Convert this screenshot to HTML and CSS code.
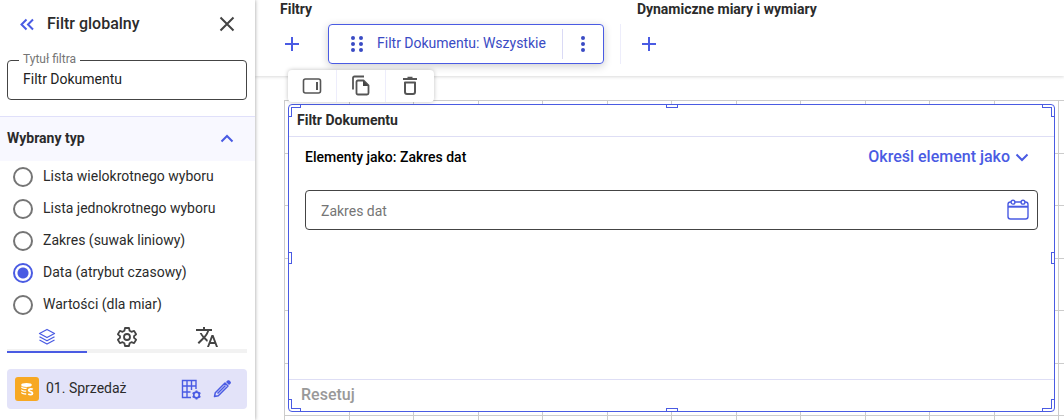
FILE: index.html
```html
<!DOCTYPE html>
<html lang="pl">
<head>
    <meta charset="UTF-8">
    <meta name="viewport" content="width=device-width, initial-scale=1.0">
    <title>Filtr globalny</title>
    <link rel="stylesheet" href="styles.css">
</head>
<body>
    <aside class="sidebar">
        <header class="sidebar-header">
            <button type="button" class="icon-button" aria-label="Zwiń">
                <svg width="24" height="24" viewBox="0 0 24 24" fill="none" stroke="#4a5be3" stroke-width="2"><path d="M11.500 7.500l-5 5 5 5M18 7.500l-5 5 5 5"/></svg>
            </button>
            <h1>Filtr globalny</h1>
            <button type="button" class="icon-button" aria-label="Zamknij">
                <svg width="24" height="24" viewBox="0 0 24 24" fill="none" stroke="#444" stroke-width="2"><path d="M5.500 5.500l13 13M18.500 5.500l-13 13"/></svg>
            </button>
        </header>

        <div class="text-field">
            <label for="filterTitle">Tytuł filtra</label>
            <input type="text" id="filterTitle" value="Filtr Dokumentu">
        </div>

        <button type="button" class="section-toggle">
            Wybrany typ
            <svg width="24" height="24" viewBox="0 0 24 24" fill="none" stroke="#4a5be3" stroke-width="2"><path d="M6.500 15.500l5.500-5.500 5.500 5.500"/></svg>
        </button>

        <div class="radio-list">
            <label><input type="radio" name="type"> <span>Lista wielokrotnego wyboru</span></label>
            <label><input type="radio" name="type"> <span>Lista jednokrotnego wyboru</span></label>
            <label><input type="radio" name="type"> <span>Zakres (suwak liniowy)</span></label>
            <label><input type="radio" name="type" checked> <span>Data (atrybut czasowy)</span></label>
            <label><input type="radio" name="type"> <span>Wartości (dla miar)</span></label>
        </div>

        <nav class="tabs">
            <button type="button" class="tab active" aria-label="Dane">
                <svg width="20" height="20" viewBox="0 0 20 20" fill="none" stroke="#4a5be3" stroke-width="1.300" stroke-linejoin="round"><path d="M10 2.500l7.500 4-7.500 4-7.500-4zM2.500 9.800l7.500 4 7.500-4M2.500 13l7.500 4 7.500-4"/></svg>
            </button>
            <button type="button" class="tab" aria-label="Ustawienia">
                <svg width="24" height="24" viewBox="0 0 24 24" fill="none" stroke="#444" stroke-width="1.800" stroke-linejoin="round"><path d="M10 3h4l.6 2.800 1.800 1 2.700-.9 2 3.400-2.100 1.900v1.600l2.100 1.900-2 3.400-2.700-.9-1.800 1L14 21h-4l-.6-2.800-1.800-1-2.700.9-2-3.400L5 12.800v-1.600L2.900 9.300l2-3.400 2.700.9 1.800-1z"/><circle cx="12" cy="12" r="3"/></svg>
            </button>
            <button type="button" class="tab" aria-label="Tłumaczenia">
                <svg width="24" height="24" viewBox="0 0 24 24" fill="#444"><path d="M12.870 15.070l-2.540-2.510.030-.03c1.740-1.940 2.980-4.170 3.710-6.530H17V4h-7V2H8v2H1v1.990h11.170C11.500 7.920 10.440 9.750 9 11.350 8.070 10.320 7.300 9.190 6.690 8h-2c.730 1.630 1.730 3.170 2.980 4.560l-5.090 5.020L4 19l5-5 3.110 3.110.760-2.040zM18.500 10h-2L12 22h2l1.120-3h4.750L21 22h2l-4.500-12zm-2.620 7l1.620-4.330L19.120 17h-3.240z"/></svg>
            </button>
        </nav>

        <div class="data-source">
            <svg width="24" height="24" viewBox="0 0 24 24">
                <rect width="24" height="24" rx="3" fill="#f7a823"/>
                <ellipse cx="11.500" cy="8" rx="5.300" ry="1.900" fill="#fff"/>
                <path d="M6.200 9.500v1.200c.8.900 2.500 1.300 5 1.300l1-1.200c-3 0-5-.4-6-1.300zM6.200 12.300v1.200c.8.900 2.500 1.300 5 1.300v-1.300c-2.400 0-4-.3-5-1.200zM6.200 15.100v1.200c.8.900 2.500 1.400 5 1.400v-1.400c-2.400 0-4-.3-5-1.200z" fill="#fff"/>
                <path d="M17.700 12.400c-1-.9-4-.9-4 .9 0 1.700 3.800.9 3.800 2.900 0 1.900-3 1.700-4.200.6" fill="none" stroke="#fff" stroke-width="1.800"/>
            </svg>
            <span>01. Sprzedaż</span>
            <button type="button" class="icon-button" aria-label="Konfiguruj tabelę">
                <svg width="24" height="24" viewBox="0 0 24 24" fill="none" stroke="#4a5be3" stroke-width="1.400">
                    <path d="M12 20.500H3.500v-17h13.500V12M3.500 9h13.500M3.500 15h8M8 3.500v17M12.500 3.500V13"/>
                    <circle cx="17.500" cy="18" r="2.800" stroke-width="1.700"/>
                    <path d="M17.500 13.500v1.700M17.500 20.800v1.700M13.600 15.700l1.500.9M19.900 19.400l1.500.9M13.600 20.300l1.500-.9M19.900 16.600l1.500-.9" stroke-width="1.800"/>
                </svg>
            </button>
            <button type="button" class="icon-button" aria-label="Edytuj">
                <svg width="24" height="24" viewBox="0 0 24 24" fill="none" stroke="#4a5be3" stroke-width="1.500" stroke-linejoin="round"><path d="M4.500 19.500l.8-3.800L15 6l3 3-9.700 9.700zM7.500 16.500l8-8"/><path d="M16 5l1.800-1.800h1.300l1.800 1.800v1.300L19 8.100z" fill="#4a5be3" stroke="none"/></svg>
            </button>
        </div>
    </aside>

    <main class="main">
        <div class="toolbar">
            <section class="toolbar-group">
                <h2>Filtry</h2>
                <div class="toolbar-row">
                    <button type="button" class="icon-button" aria-label="Dodaj filtr">
                        <svg width="24" height="24" viewBox="0 0 24 24" fill="none" stroke="#4a5be3" stroke-width="2"><path d="M12 5v14M5 12h14"/></svg>
                    </button>
                    <div class="chip">
                        <button type="button" class="chip-main">
                            <svg width="24" height="24" viewBox="0 0 24 24" fill="#3a4bc4"><circle cx="8" cy="6" r="2"/><circle cx="16" cy="6" r="2"/><circle cx="8" cy="12" r="2"/><circle cx="16" cy="12" r="2"/><circle cx="8" cy="18" r="2"/><circle cx="16" cy="18" r="2"/></svg>
                            <span>Filtr Dokumentu: Wszystkie</span>
                        </button>
                        <button type="button" class="chip-menu" aria-label="Więcej">
                            <svg width="24" height="24" viewBox="0 0 24 24" fill="#3a4bc4"><circle cx="12" cy="6" r="2"/><circle cx="12" cy="12" r="2"/><circle cx="12" cy="18" r="2"/></svg>
                        </button>
                    </div>
                </div>
            </section>
            <section class="toolbar-group">
                <h2>Dynamiczne miary i wymiary</h2>
                <div class="toolbar-row">
                    <button type="button" class="icon-button" aria-label="Dodaj miarę">
                        <svg width="24" height="24" viewBox="0 0 24 24" fill="none" stroke="#4a5be3" stroke-width="2"><path d="M12 5v14M5 12h14"/></svg>
                    </button>
                </div>
            </section>
        </div>

        <div class="board">
            <!-- guide lines under the widgets -->
            <div class="guides guide-cols"><i></i><i></i><i></i><i></i><i></i><i></i><i></i><i></i><i></i><i></i><i></i><i></i><i></i></div>
            <div class="guides guide-rows"><i></i><i></i><i></i><i></i><i></i><i></i><i></i></div>

            <section class="widget">
                <h3>Filtr Dokumentu</h3>
                <div class="widget-body">
                    <div class="widget-row">
                        <label for="dateRange">Elementy jako: Zakres dat</label>
                        <button type="button" class="link-button">
                            Określ element jako
                            <svg width="16" height="16" viewBox="0 0 16 16" fill="none" stroke="#4a5be3" stroke-width="2"><path d="M2.500 5.500L8 11l5.500-5.500"/></svg>
                        </button>
                    </div>
                    <div class="date-field">
                        <input type="text" id="dateRange" placeholder="Zakres dat">
                        <button type="button" class="icon-button" aria-label="Kalendarz">
                            <svg width="24" height="24" viewBox="0 0 24 24" fill="none" stroke="#4a5be3" stroke-width="1.400"><rect x="2" y="4" width="20" height="17" rx="2.500"/><path d="M2 8.700h20" stroke-width="2"/><circle cx="7" cy="4.200" r="1.900" fill="#fff"/><circle cx="17" cy="4.200" r="1.900" fill="#fff"/></svg>
                        </button>
                    </div>
                </div>
                <footer>
                    <button type="button" class="reset" disabled>Resetuj</button>
                </footer>

                <svg class="handle top left" width="13" height="13"><path d="M12.500 0v3.500h-9v9H0"/></svg>
                <svg class="handle top right" width="13" height="13"><path d="M.5 0v3.500h9v9H13"/></svg>
                <svg class="handle bottom left" width="13" height="13"><path d="M12.500 13V9.500h-9v-9H0"/></svg>
                <svg class="handle bottom right" width="13" height="13"><path d="M.5 13V9.500h9v-9H13"/></svg>
                <svg class="handle top center" width="12" height="4"><path d="M.5 0v3.500h11V0"/></svg>
                <svg class="handle bottom center" width="12" height="4"><path d="M.5 4V.5h11V4"/></svg>
                <svg class="handle left middle" width="4" height="12"><path d="M0 .5h3.500v11H0"/></svg>
                <svg class="handle right middle" width="4" height="12"><path d="M4 .5H.5v11H4"/></svg>

                <div class="widget-tools">
                    <button type="button" aria-label="Panel">
                        <svg width="24" height="24" viewBox="0 0 24 24" fill="none" stroke="#555" stroke-width="1.600"><rect x="3.500" y="5" width="17" height="14" rx="2"/><path d="M17 8v8" stroke-width="2"/></svg>
                    </button>
                    <button type="button" aria-label="Kopiuj">
                        <svg width="24" height="24" viewBox="0 0 24 24" fill="none" stroke="#555" stroke-width="1.800" stroke-linejoin="round"><path d="M4 15.500V4q0-1.500 1.500-1.500H15M9 6.500h5.500l5 5V19q0 1.500-1.500 1.500H9q-1.500 0-1.500-1.500V8q0-1.500 1.500-1.500z"/><path d="M14 6.500V12h5.500z" fill="#444" stroke="none"/></svg>
                    </button>
                    <button type="button" aria-label="Usuń">
                        <svg width="24" height="24" viewBox="0 0 24 24" fill="none" stroke="#555" stroke-width="2" stroke-linejoin="round"><path d="M7 8.500h10V18q0 2-2 2H9q-2 0-2-2zM5 5h14M9.500 3.800h5"/></svg>
                    </button>
                </div>
            </section>
        </div>
    </main>
</body>
</html>
```
FILE: styles.css
```css
* {
    box-sizing: border-box;
}
body {
    margin: 0;
    display: flex;
    height: 100vh;
    overflow: hidden;
    font-family: Roboto, Arial, sans-serif;
    font-size: 14px;
    line-height: 20px;
    color: #2b2b2b;
    background-color: #fff;
}
h1, h2, h3 {
    margin: 0;
    font-size: 14px;
    font-weight: 500;
}
button {
    font: inherit;
    color: inherit;
    background: none;
    border: none;
    padding: 0;
    cursor: pointer;
}
svg {
    display: block;
    flex: none;
}
.icon-button {
    flex: none;
}

/* sidebar */
.sidebar {
    width: 255px;
    flex: none;
    background-color: #fff;
    box-shadow: 0 0 4px rgba(0, 0, 0, 0.4);
    z-index: 1;
}
.sidebar-header {
    display: flex;
    align-items: center;
    gap: 8px;
    height: 48px;
    padding: 0 16px 0 15px;
}
.sidebar-header h1 {
    flex: 1;
    font-size: 16px;
}
.text-field {
    position: relative;
    margin: 12px 8px 16px 7px;
}
.text-field label {
    position: absolute;
    top: -9px;
    left: 12px;
    padding: 0 4px;
    font-size: 12px;
    line-height: 16px;
    color: #757575;
    background-color: #fff;
}
.text-field input, .date-field {
    width: 100%;
    height: 40px;
    border: 1px solid #444;
    border-radius: 4px;
}
.text-field input {
    display: block;
    padding: 0 15px 2px;
    font: inherit;
    color: #222;
}
.section-toggle {
    display: flex;
    align-items: center;
    justify-content: space-between;
    width: 100%;
    height: 45px;
    padding: 0 16px 2px 7px;
    font-weight: 700;
    background-color: #f8f8ff;
    border-top: 1px solid #e0e0fa;
}
.radio-list label {
    display: flex;
    align-items: center;
    gap: 10px;
    height: 32px;
    padding-left: 13px;
}
.radio-list span, .chip-main span, .data-source span {
    padding-bottom: 2px;
}
.radio-list input {
    appearance: none;
    width: 20px;
    height: 20px;
    margin: 0;
    border: 2px solid #757575;
    border-radius: 50%;
}
.radio-list input:checked {
    border-color: #4a5be3;
    background: radial-gradient(circle, #4a5be3 5px, #fff 6px);
}
.tabs {
    display: flex;
    margin: 0 8px 16px 7px;
    background: linear-gradient(#f2f2f2, #f2f2f2) bottom / 100% 4px no-repeat;
}
.tab {
    flex: 1;
    display: flex;
    align-items: center;
    justify-content: center;
    height: 32px;
    padding-top: 2px;
    border-bottom: 2px solid transparent;
}
.tab.active {
    border-bottom-color: #4a5be3;
}
.data-source {
    display: flex;
    align-items: center;
    gap: 7px;
    height: 40px;
    margin: 0 8px 0 7px;
    padding: 0 13px 0 8px;
    background-color: #e3e3f9;
    border-radius: 4px;
}
.data-source span {
    flex: 1;
}

/* top toolbar */
.main {
    flex: 1;
    min-width: 0;
    display: flex;
    flex-direction: column;
}
.toolbar {
    display: flex;
    height: 76px;
    flex: none;
    padding-left: 25px;
    box-shadow: 0 1px 3px rgba(0, 0, 0, 0.15);
}
.toolbar-group + .toolbar-group {
    margin-left: 16px;
    background: linear-gradient(#ededfb, #ededfb) 0 24px / 1px 40px no-repeat;
    padding-left: 17px;
}
.toolbar-group h2 {
    height: 24px;
    line-height: 18px;
    font-weight: 700;
}
.toolbar-row {
    display: flex;
    align-items: center;
    gap: 24px;
    height: 40px;
}
.chip {
    display: flex;
    align-items: center;
    height: 40px;
    color: #3a4bc4;
    border: 1px solid #4a5be3;
    border-radius: 4px;
    box-shadow: 0 2px 8px rgba(0, 0, 0, 0.2);
}
.chip-main {
    display: flex;
    align-items: center;
    gap: 8px;
    padding: 0 16px;
}
.chip-menu {
    display: flex;
    align-items: center;
    height: 30px;
    padding: 0 8px;
    border-left: 1px solid #dadaf5;
}

/* board with the edited widget */
.board {
    position: relative;
    flex: 1;
    margin: 24px 0 0 29px;
    padding: 4px 9px 8px 4px;
}
.guides {
    position: absolute;
    inset: 0;
    display: grid;
}
.guide-cols {
    grid-template-columns: repeat(12, 1fr) 6px;
}
.guide-cols i {
    border-left: 1px solid #ccc;
}
.guide-rows {
    grid-template-rows: repeat(6, 1fr) 5px;
}
.guide-rows i {
    border-top: 1px solid #ccc;
}
.widget {
    position: relative;
    display: flex;
    flex-direction: column;
    height: 100%;
    background-color: #fff;
    border: 1px solid #4a5be3;
    border-radius: 4px;
}
.widget h3 {
    height: 32px;
    padding-left: 8px;
    line-height: 30px;
    font-weight: 700;
    border-bottom: 1px solid #dedef5;
}
.widget-body {
    flex: 1;
    padding: 10px 16px;
}
.widget-row {
    display: flex;
    justify-content: space-between;
    align-items: center;
    height: 20px;
    margin-bottom: 23px;
    color: #000;
    font-weight: 500;
}
.link-button {
    display: flex;
    align-items: center;
    gap: 4px;
    margin-right: 8px;
    font-size: 16px;
    color: #4a5be3;
}
.date-field {
    display: flex;
    align-items: center;
    padding: 0 7px 0 15px;
}
.date-field input {
    flex: 1;
    min-width: 0;
    padding: 2px 0 0;
    border: none;
    outline: none;
    font: inherit;
}
.date-field input::placeholder {
    color: #757575;
}
.widget footer {
    height: 32px;
    padding: 5px 12px;
    border-top: 1px solid #dedef5;
}
.reset {
    font-size: 16px;
    font-weight: 500;
    color: #999;
}

/* resize handles */
.handle {
    position: absolute;
    fill: none;
    stroke: #4a5be3;
    shape-rendering: crispEdges;
}
.top {
    top: -1px;
}
.bottom {
    bottom: -1px;
}
.left {
    left: -1px;
}
.right {
    right: -1px;
}
.center {
    left: calc(50% - 6px);
}
.middle {
    top: calc(50% - 6px);
}
.widget-tools {
    position: absolute;
    top: -35px;
    left: -1px;
    display: flex;
    background-color: #fff;
    border-radius: 4px;
    box-shadow: 0 0 4px rgba(0, 0, 0, 0.25);
}
.widget-tools button {
    padding: 4px 12px;
}
.widget-tools button + button {
    border-left: 1px solid #ededfb;
}
```
